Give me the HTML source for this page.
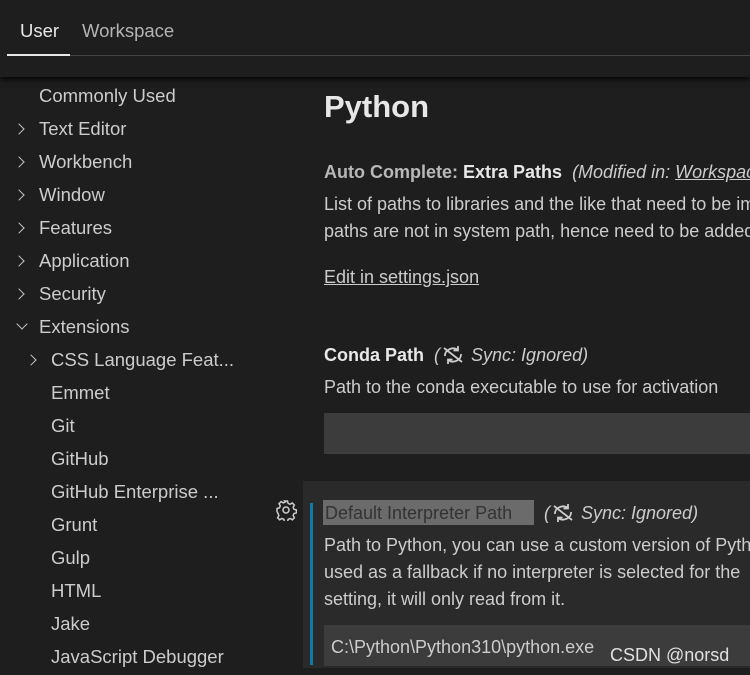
<!DOCTYPE html>
<html><head><style>
*{margin:0;padding:0;box-sizing:border-box}
html,body{width:750px;height:675px;overflow:hidden}
body{background:#1e1e1e;font-family:"Liberation Sans",sans-serif;color:#cccccc}
#w{position:relative;width:750px;height:675px;overflow:hidden}
.a{position:absolute;white-space:nowrap}
.s{font-size:18.5px;line-height:24px}
.chev{position:absolute;width:8px;height:8px;border-right:1.6px solid #c5c5c5;border-bottom:1.6px solid #c5c5c5}
.r{transform:rotate(-45deg)}
.d{transform:rotate(45deg)}
.m{font-size:18px;line-height:24px}
.c{overflow:hidden;width:426px}
i{color:#cccccc}
</style></head><body><div id="w">
<div class="a" style="left:0;top:0;width:750px;height:77px;background:#1e1e1e;box-shadow:0 2px 6px #000;z-index:2"></div>
<div class="a" style="left:20px;top:20px;font-size:18.5px;color:#e7e7e7;z-index:3">User</div>
<div class="a" style="left:82px;top:20px;font-size:18.5px;color:#b4b4b4;z-index:3">Workspace</div>
<div class="a" style="left:70px;top:55px;width:680px;height:1px;background:#444;z-index:3"></div>
<div class="a" style="left:7px;top:54px;width:63px;height:2px;background:#e7e7e7;z-index:3"></div>

<div class="a s" style="left:39px;top:84px">Commonly Used</div>
<div class="chev r" style="left:15px;top:125px"></div><div class="a s" style="left:39px;top:117px">Text Editor</div>
<div class="chev r" style="left:15px;top:158px"></div><div class="a s" style="left:39px;top:150px">Workbench</div>
<div class="chev r" style="left:15px;top:191px"></div><div class="a s" style="left:39px;top:183px">Window</div>
<div class="chev r" style="left:15px;top:224px"></div><div class="a s" style="left:39px;top:216px">Features</div>
<div class="chev r" style="left:15px;top:257px"></div><div class="a s" style="left:39px;top:249px">Application</div>
<div class="chev r" style="left:15px;top:290px"></div><div class="a s" style="left:39px;top:282px">Security</div>
<div class="chev d" style="left:18px;top:320px"></div><div class="a s" style="left:39px;top:315px">Extensions</div>
<div class="chev r" style="left:27px;top:356px"></div><div class="a s" style="left:51px;top:348px">CSS Language Feat...</div>
<div class="a s" style="left:51px;top:381px">Emmet</div>
<div class="a s" style="left:51px;top:414px">Git</div>
<div class="a s" style="left:51px;top:447px">GitHub</div>
<div class="a s" style="left:51px;top:480px">GitHub Enterprise ...</div>
<div class="a s" style="left:51px;top:513px">Grunt</div>
<div class="a s" style="left:51px;top:546px">Gulp</div>
<div class="a s" style="left:51px;top:579px">HTML</div>
<div class="a s" style="left:51px;top:612px">Jake</div>
<div class="a s" style="left:51px;top:645px">JavaScript Debugger</div>

<div class="a" style="left:324px;top:89px;font-size:31px;font-weight:bold;color:#e7e7e7">Python</div>
<div class="a m c" style="left:324px;top:160px"><b style="color:#b8b8b8">Auto Complete: </b><b style="color:#e7e7e7">Extra Paths</b>&nbsp;&nbsp;<i style="font-style:italic">(Modified in: <u>Workspace</u></i></div>
<div class="a m c" style="left:324px;top:192px">List of paths to libraries and the like that need to be imported</div>
<div class="a m c" style="left:324px;top:219px">paths are not in system path, hence need to be added</div>
<div class="a m" style="left:324px;top:265px;text-decoration:underline">Edit in settings.json</div>

<div class="a m" style="left:324px;top:343px"><b style="color:#e7e7e7">Conda Path</b>&nbsp;&nbsp;<i>(<svg width="26" height="20" viewBox="0 0 26 20" style="vertical-align:-4px" fill="none" stroke="#ccc" stroke-width="1.8"><path d="M5 11a8 7 0 0 1 13-6M21 9a8 7 0 0 1-13 6M18 1v4.5h-4.5M8 19v-4.5h4.5M4 3l18 14"/></svg> Sync: Ignored)</i></div>
<div class="a m" style="left:324px;top:375px">Path to the conda executable to use for activation</div>
<div class="a" style="left:324px;top:413px;width:426px;height:41px;background:#3c3c3c"></div>

<div class="a" style="left:303px;top:481px;width:447px;height:187px;background:#2a2a2a"></div>
<div class="a" style="left:310px;top:503px;width:3px;height:162px;background:#0e7aa6"></div>
<svg class="a" style="left:275px;top:499px" width="22" height="22" viewBox="0 0 22 22" fill="none" stroke="#ccc" stroke-width="1.5"><circle cx="11" cy="11" r="3"/><path d="M9.5 2h3l.6 2.4 2 .9 2.2-1.3 2.1 2.1-1.3 2.2.9 2 2.4.6v3l-2.4.6-.9 2 1.3 2.2-2.1 2.1-2.2-1.3-2 .9-.6 2.4h-3l-.6-2.4-2-.9-2.2 1.3-2.1-2.1 1.3-2.2-.9-2L2 12.5v-3l2.4-.6.9-2L4 4.7l2.1-2.1 2.2 1.3 2-.9z"/></svg>
<div class="a" style="left:323px;top:500px;width:211px;height:25px;background:#6b6b6b"></div>
<div class="a m" style="left:325px;top:501px;color:#333">Default Interpreter Path</div>
<div class="a m" style="left:544px;top:501px"><i>(<svg width="26" height="20" viewBox="0 0 26 20" style="vertical-align:-4px" fill="none" stroke="#ccc" stroke-width="1.8"><path d="M5 11a8 7 0 0 1 13-6M21 9a8 7 0 0 1-13 6M18 1v4.5h-4.5M8 19v-4.5h4.5M4 3l18 14"/></svg> Sync: Ignored)</i></div>
<div class="a m c" style="left:324px;top:533px">Path to Python, you can use a custom version of Python</div>
<div class="a m c" style="left:324px;top:560px">used as a fallback if no interpreter is selected for the</div>
<div class="a m" style="left:324px;top:587px">setting, it will only read from it.</div>
<div class="a" style="left:324px;top:625px;width:426px;height:41px;background:#3c3c3c"></div>
<div class="a m" style="left:331px;top:635px">C:\Python\Python310\python.exe</div>
<div class="a" style="left:610px;top:645px;font-size:18px;color:#e0e0e0">CSDN @norsd</div>
</div></body></html>
